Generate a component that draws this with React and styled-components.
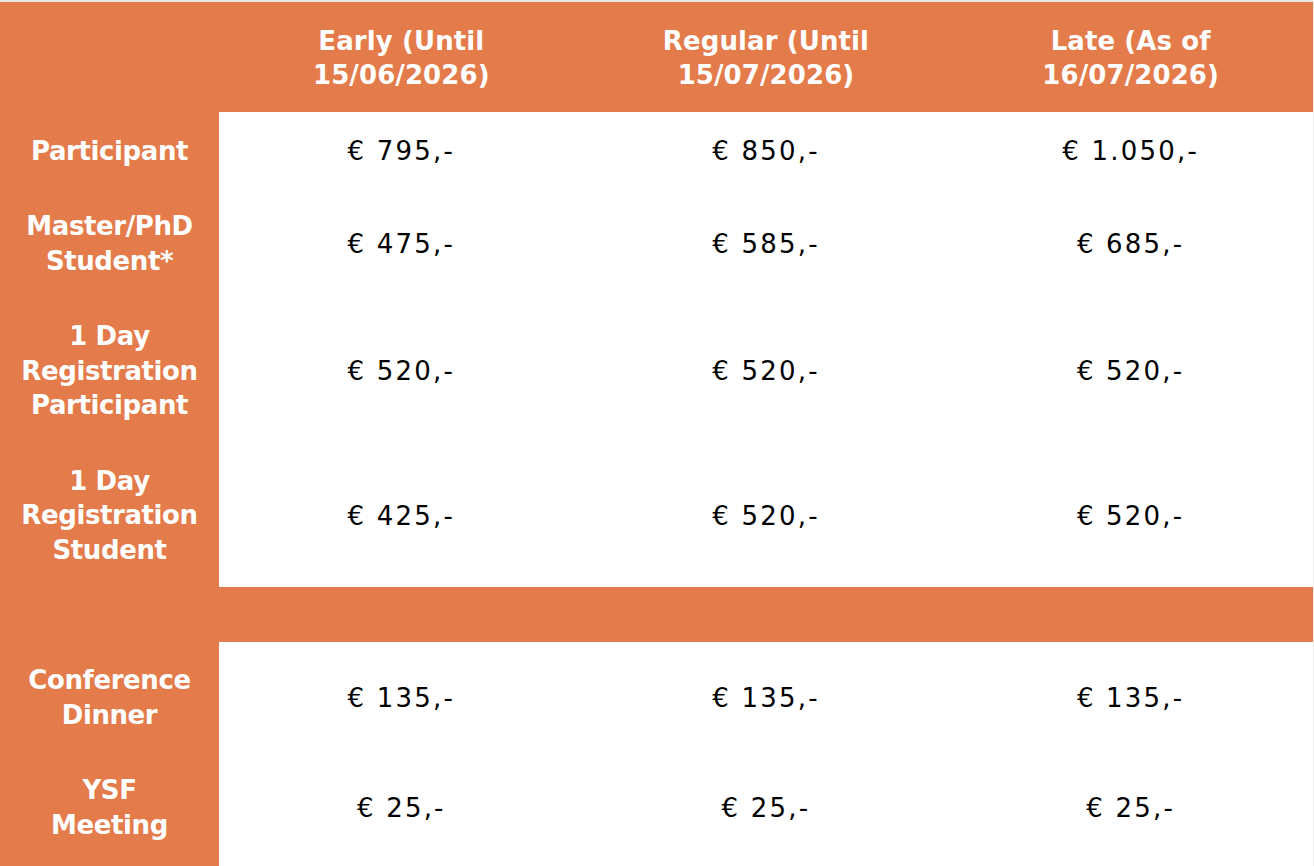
import React from "react";
import styled, { createGlobalStyle } from "styled-components";

const ORANGE = "#e47b4b";

const Global = createGlobalStyle`
  html, body { margin: 0; padding: 0; background: #ffffff; overflow: hidden; }
  body { font-family: "DejaVu Sans", "Liberation Sans", sans-serif; }
`;

const Page = styled.div`
  border-top: 2px solid #e8e8e8;
  width: 1313px;
  border-right: 1px solid #ececec;
`;

const Table = styled.table`
  width: 100%;
  border-collapse: collapse;
  border-spacing: 0;
  table-layout: fixed;
`;

const HeadCell = styled.th`
  background: ${ORANGE};
  color: #ffffff;
  font-weight: 700;
  font-size: 26px;
  line-height: 34.5px;
  letter-spacing: 0.1px;
  padding: 21.5px 6px 19.5px;
  text-align: center;
  vertical-align: middle;
`;

const RowHead = styled.th`
  background: ${ORANGE};
  color: #ffffff;
  font-weight: 700;
  font-size: 26px;
  line-height: 34.5px;
  letter-spacing: -0.4px;
  padding: 21.5px 4px 19.5px;
  text-align: center;
  vertical-align: middle;
`;

const Cell = styled.td`
  background: #ffffff;
  color: #000000;
  font-size: 26px;
  line-height: 34.5px;
  letter-spacing: 2.2px;
  padding: 22px 6px 19px;
  text-align: center;
  vertical-align: middle;
`;

const BandCell = styled.td`
  background: ${(p) => (p.$white ? "#ffffff" : ORANGE)};
  height: ${(p) => p.$h}px;
  padding: 0;
`;

const Lines = ({ lines }) =>
  lines.map((l, i) => (
    <React.Fragment key={i}>
      {i > 0 && <br />}
      {l}
    </React.Fragment>
  ));

const headers = [
  ["Early (Until", "15/06/2026)"],
  ["Regular (Until", "15/07/2026)"],
  ["Late (As of", "16/07/2026)"],
];

const mainRows = [
  { label: ["Participant"], prices: ["€ 795,-", "€ 850,-", "€ 1.050,-"] },
  { label: ["Master/PhD", "Student*"], prices: ["€ 475,-", "€ 585,-", "€ 685,-"] },
  { label: ["1 Day", "Registration", "Participant"], prices: ["€ 520,-", "€ 520,-", "€ 520,-"] },
  { label: ["1 Day", "Registration", "Student"], prices: ["€ 425,-", "€ 520,-", "€ 520,-"] },
];

const extraRows = [
  { label: ["Conference", "Dinner"], prices: ["€ 135,-", "€ 135,-", "€ 135,-"] },
  { label: ["YSF", "Meeting"], prices: ["€ 25,-", "€ 25,-", "€ 25,-"] },
];

const PriceRow = ({ row }) => (
  <tr>
    <RowHead>
      <Lines lines={row.label} />
    </RowHead>
    {row.prices.map((p, i) => (
      <Cell key={i}>{p}</Cell>
    ))}
  </tr>
);

export default function App() {
  return (
    <>
      <Global />
      <Page>
        <Table>
          <colgroup>
            <col style={{ width: "219px" }} />
            <col />
            <col />
            <col />
          </colgroup>
          <thead>
            <tr>
              <HeadCell />
              {headers.map((h, i) => (
                <HeadCell key={i}>
                  <Lines lines={h} />
                </HeadCell>
              ))}
            </tr>
          </thead>
          <tbody>
            {mainRows.map((r, i) => (
              <PriceRow key={i} row={r} />
            ))}
            <tr>
              <BandCell $h={55} />
              <BandCell $h={55} />
              <BandCell $h={55} />
              <BandCell $h={55} />
            </tr>
            {extraRows.map((r, i) => (
              <PriceRow key={i} row={r} />
            ))}
            <tr>
              <BandCell $h={4} />
              <BandCell $h={4} $white />
              <BandCell $h={4} $white />
              <BandCell $h={4} $white />
            </tr>
          </tbody>
        </Table>
      </Page>
    </>
  );
}
